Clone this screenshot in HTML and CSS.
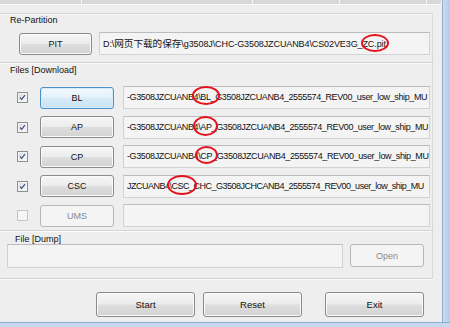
FILE: index.html
```html
<!DOCTYPE html>
<html lang="en">
<head>
    <meta charset="UTF-8">
    <meta name="viewport" content="width=device-width, initial-scale=1.0">
    <title>Odin Downloader</title>
    <link rel="stylesheet" href="styles.css">
</head>
<body>
    <div class="window">
        <div class="main">
            <div class="topbar">
                <span></span><span></span><span></span><span></span><span></span>
            </div>

            <section class="group repartition">
                <div class="caption">Re-Partition</div>
                <div class="pit-row">
                    <button class="btn btn-pit">PIT</button>
                    <div class="field field-pit">
                        <span class="field-text">D:\<span class="cjk">网页下载的保存</span>\g3508J\CHC-G3508JZCUANB4\CS02VE3G_ZC.pit</span>
                        <span class="mark mark-pit"></span>
                    </div>
                </div>
            </section>

            <section class="group files">
                <div class="caption">Files [Download]</div>
                <div class="file-list">
                    <div class="file-row">
                        <span class="check checked"><svg viewBox="0 0 11 11"><polyline points="2.5,5.5 4.5,7.8 8.5,2.5"/></svg></span>
                        <button class="btn btn-file focus">BL</button>
                        <div class="field">
                            <span class="field-text">-G3508JZCUANB4\BL_G3508JZCUANB4_2555574_REV00_user_low_ship_MU</span>
                            <span class="mark mark-bl"></span>
                        </div>
                    </div>
                    <div class="file-row">
                        <span class="check checked"><svg viewBox="0 0 11 11"><polyline points="2.5,5.5 4.5,7.8 8.5,2.5"/></svg></span>
                        <button class="btn btn-file">AP</button>
                        <div class="field">
                            <span class="field-text">-G3508JZCUANB4\AP_G3508JZCUANB4_2555574_REV00_user_low_ship_MU</span>
                            <span class="mark mark-ap"></span>
                        </div>
                    </div>
                    <div class="file-row">
                        <span class="check checked"><svg viewBox="0 0 11 11"><polyline points="2.5,5.5 4.5,7.8 8.5,2.5"/></svg></span>
                        <button class="btn btn-file">CP</button>
                        <div class="field">
                            <span class="field-text">-G3508JZCUANB4\CP_G3508JZCUANB4_2555574_REV00_user_low_ship_MU</span>
                            <span class="mark mark-cp"></span>
                        </div>
                    </div>
                    <div class="file-row">
                        <span class="check checked"><svg viewBox="0 0 11 11"><polyline points="2.5,5.5 4.5,7.8 8.5,2.5"/></svg></span>
                        <button class="btn btn-file">CSC</button>
                        <div class="field">
                            <span class="field-text text-tight">JZCUANB4\CSC_CHC_G3508JCHCANB4_2555574_REV00_user_low_ship_MU</span>
                            <span class="mark mark-csc"></span>
                        </div>
                    </div>
                    <div class="file-row">
                        <span class="check disabled"></span>
                        <button class="btn btn-file disabled">UMS</button>
                        <div class="field"></div>
                    </div>
                </div>
            </section>

            <section class="group dump">
                <div class="caption">File [Dump]</div>
                <div class="dump-row">
                    <div class="field dump-field"></div>
                    <button class="btn btn-open disabled">Open</button>
                </div>
            </section>

            <div class="actions">
                <button class="btn btn-action">Start</button>
                <button class="btn btn-action btn-reset">Reset</button>
                <button class="btn btn-action btn-exit">Exit</button>
            </div>
        </div>
        <div class="frame-right"></div>
    </div>
    <div class="frame-bottom"></div>
</body>
</html>
```

FILE: styles.css
```css
* {
    box-sizing: border-box;
    margin: 0;
    padding: 0;
}
body {
    width: 450px;
    height: 327px;
    overflow: hidden;
    background-color: #eeeeee;
    font-family: "Liberation Sans", "Noto Sans CJK SC", sans-serif;
    font-size: 9px;
    color: #111;
}
.window {
    display: flex;
    height: 322px;
}
.main {
    width: 442px;
}
.frame-right {
    width: 8px;
    border-left: 1px solid #8eaed0;
    background: linear-gradient(to right, #c9dcf0, #b3cce8);
}
.frame-bottom {
    height: 5px;
    border-top: 1px solid #8eaed0;
    background-color: #c6d9ee;
}

/* cut-off table header at the top */
.topbar {
    display: grid;
    grid-template-columns: 82px 171px 87px 87px 1fr;
    height: 5px;
    border-bottom: 1px solid #fafafa;
}
.topbar span {
    background-color: #d8d8d8;
    border-right: 1px solid #f7f7f7;
}

.group {
    width: 433px;
    border-top: 1px solid #d3d3d3;
    border-right: 1px solid #d9d9d9;
    box-shadow: inset 0 1px 0 #fbfbfb;
}
.caption {
    line-height: 11px;
    padding-left: 10px;
}

.repartition {
    margin-top: 8px;
    padding: 1px 2px 7px 0;
}
.pit-row {
    display: flex;
    align-items: center;
    gap: 7px;
    height: 23px;
    margin-top: 6px;
    padding-left: 19px;
}

.files {
    padding: 2px 2px 3px 0;
}
.file-list {
    display: flex;
    flex-direction: column;
    gap: 6.5px;
    margin-top: 10px;
}
.file-row {
    display: flex;
    align-items: center;
    height: 23px;
    padding-left: 17px;
}

.dump {
    padding: 3px 2px 10px 0;
}
.dump .caption {
    padding-left: 15px;
}
.dump-row {
    display: flex;
    align-items: flex-start;
    gap: 7px;
    height: 24px;
    margin-top: -1px;
    padding-left: 7px;
}

.actions {
    display: flex;
    width: 433px;
    height: 44px;
    padding: 13px 0 0 96px;
    border-top: 1px solid #d3d3d3;
    box-shadow: inset 0 1px 0 #fbfbfb;
}

/* buttons */
.btn {
    flex: none;
    font-family: inherit;
    font-size: 9px;
    color: #111;
    border: 1px solid #8a8a8a;
    border-radius: 3px;
    background: linear-gradient(#f6f6f6, #ececec 48%, #dedede 52%, #d2d2d2);
    box-shadow: inset 0 0 0 1px #fafafa;
}
.btn.focus {
    border-color: #4a93c8;
    background: linear-gradient(#f3f9fd, #e4f1fa 48%, #d6eaf7 52%, #c9e3f3);
    box-shadow: inset 0 0 0 1px #d2ecfb;
}
.btn.disabled {
    color: #8a8a8a;
    border-color: #b4b8ba;
    background: #f4f4f4;
    box-shadow: none;
}
.btn-pit {
    width: 73px;
    height: 22px;
}
.btn-file {
    width: 74px;
    height: 22px;
    margin-left: 12px;
}
.btn-open {
    width: 74px;
    height: 23px;
}
.btn-action {
    width: 99px;
    height: 25px;
    font-size: 9.5px;
}
.btn-reset {
    margin-left: 8px;
}
.btn-exit {
    margin-left: 23px;
}

/* checkboxes */
.check {
    display: block;
    flex: none;
    width: 11px;
    height: 11px;
    border: 1px solid #8e8f8f;
    background: linear-gradient(135deg, #dadada, #fbfbfb);
    box-shadow: inset 0 0 0 1px #f4f4f4;
}
.check svg {
    display: block;
    width: 9px;
    height: 9px;
}
.check polyline {
    fill: none;
    stroke: #3c5088;
    stroke-width: 1.4;
}
.check.disabled {
    border-color: #c4c4c4;
    background: #f6f6f6;
    box-shadow: none;
}

/* read-only path fields */
.field {
    position: relative;
    flex: 1;
    min-width: 0;
    height: 23px;
    margin-left: 9px;
    border: 1px solid #d2d2d2;
    border-top-color: #bcbcbc;
    background-color: #f4f4f4;
}
.field-pit {
    margin-left: 0;
}
.dump-field {
    flex: none;
    width: 336px;
    height: 24px;
    margin-left: 0;
}
.field-text {
    display: block;
    overflow: hidden;
    white-space: nowrap;
    line-height: 21px;
    padding-left: 3px;
    letter-spacing: -0.38px;
}
.field-text.text-tight {
    letter-spacing: -0.5px;
}
.field-pit .field-text {
    letter-spacing: -0.1px;
}
.cjk {
    font-size: 9.6px;
    letter-spacing: 0;
}

/* red hand-drawn circles */
.mark {
    position: absolute;
    border: 2px solid #e3121c;
    border-radius: 50%;
}
.mark-pit { left: 261px; top: 1px; width: 28px; height: 18px; }
.mark-bl { left: 68px; top: -1px; width: 28px; height: 19px; }
.mark-ap { left: 69px; top: -1px; width: 25px; height: 20px; }
.mark-cp { left: 71px; top: 0; width: 23px; height: 18px; }
.mark-csc { left: 43px; top: -1px; width: 30px; height: 20px; }
```
